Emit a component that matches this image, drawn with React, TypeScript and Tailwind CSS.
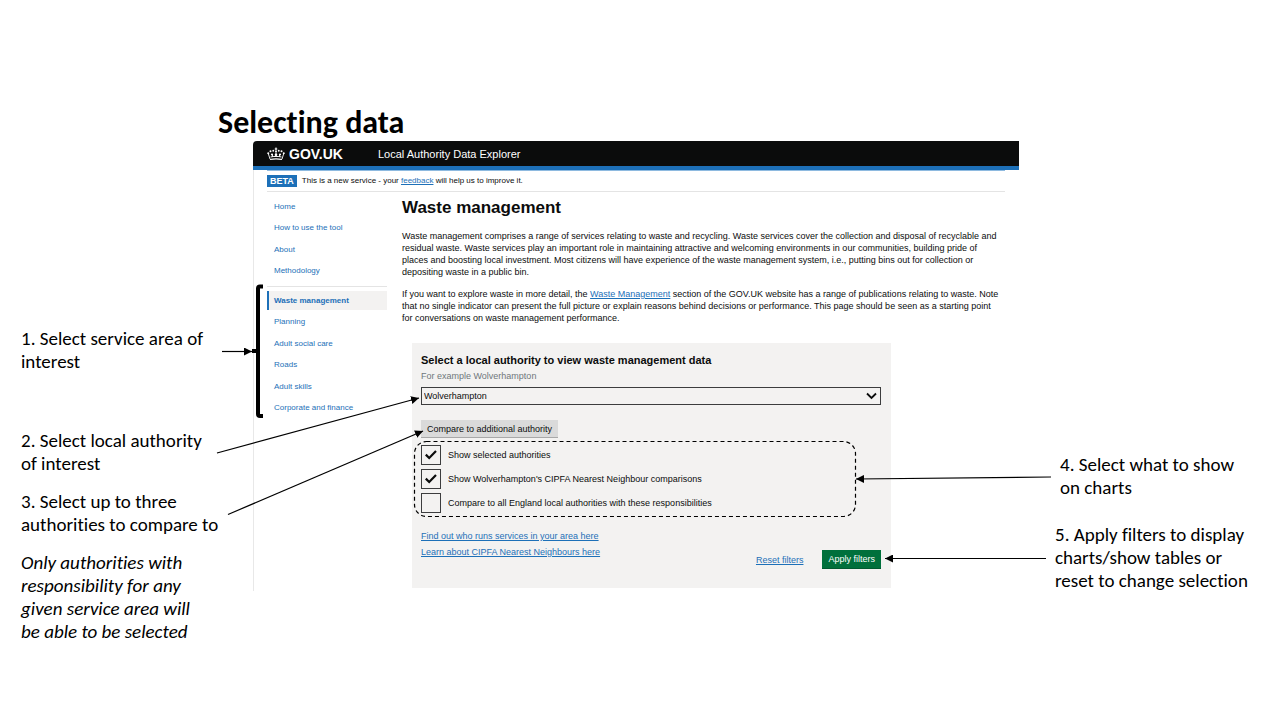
import { useState } from "react";

const guideLinks = ["Home", "How to use the tool", "About", "Methodology"];
const serviceLinks = ["Waste management", "Planning", "Adult social care", "Roads", "Adult skills", "Corporate and finance"];
const link = "text-[#1d70b8] underline";

function Crown() {
  return (
    <svg className="h-[14px] w-[18px]" viewBox="0 0 36 28" fill="none" stroke="white" strokeWidth="1.8" aria-hidden="true">
      <path d="M6 25c7-1.600 17-1.600 24 0" strokeWidth="2.4" />
      <path d="M6 24L2.500 13M30 24l3.500-11M12 20l-2-6M24 20l2-6M18 20v-9" />
      <path d="M7 20c7-1.600 15-1.600 22 0" strokeWidth="2" />
      <path d="M15.500 4h5M18 1v6" strokeWidth="2.2" />
      <g fill="white" stroke="none">
        <circle cx="18" cy="9" r="2" />
        <circle cx="12.500" cy="7.500" r="1.900" />
        <circle cx="23.500" cy="7.500" r="1.900" />
        <circle cx="7" cy="8.500" r="2" />
        <circle cx="29" cy="8.500" r="2" />
        <circle cx="2.500" cy="12.500" r="2" />
        <circle cx="33.500" cy="12.500" r="2" />
        <circle cx="18" cy="15.500" r="2.600" />
        <circle cx="10" cy="15" r="2.200" />
        <circle cx="26" cy="15" r="2.200" />
      </g>
    </svg>
  );
}

function Option({ label, initial }: { label: string; initial: boolean }) {
  const [on, setOn] = useState(initial);
  return (
    <label className="flex h-5 items-center gap-[7px]">
      <span className="relative flex size-5">
        <input type="checkbox" checked={on} onChange={() => setOn(!on)} className="size-5 appearance-none border border-[#3c3d3e]" />
        {on && (
          <svg className="pointer-events-none absolute inset-0 size-5" viewBox="0 0 20 20" fill="none" stroke="#0b0c0c" strokeWidth="2.2" aria-hidden="true">
            <path d="M4.800 9.600l3.400 3.400L15 6" />
          </svg>
        )}
      </span>
      {label}
    </label>
  );
}

function NavGroup({ items, current, className }: { items: string[]; current?: string; className: string }) {
  return (
    <ul className={`flex flex-col justify-between ${className}`}>
      {items.map((item) => (
        <li key={item}>
          <a
            href="#"
            className={
              item === current
                ? "flex h-[19px] items-center border-l-2 border-[#1d70b8] bg-[#f3f2f1] pl-[5px] font-bold"
                : "flex h-[19px] items-center pl-[7px]"
            }
          >
            {item}
          </a>
        </li>
      ))}
    </ul>
  );
}

function Annotations() {
  return (
    <svg className="pointer-events-none absolute top-0 -left-[37px] h-[440px] w-[840px]" viewBox="216 141 840 440" fill="none" stroke="black" aria-hidden="true">
      <defs>
        <marker id="head" markerUnits="userSpaceOnUse" markerWidth="9" markerHeight="8" refX="8" refY="4" orient="auto">
          <path d="M0 0L8 4L0 8z" fill="black" stroke="none" />
        </marker>
      </defs>
      <path d="M263 286.500h-3q-2 0-2 2v125.500q0 2 2 2h3" strokeWidth="4" />
      <path d="M252 351h6" strokeWidth="4" />
      <g strokeWidth="1.2">
        <path d="M222 351.500H252" markerEnd="url(#head)" />
        <path d="M217 453L419 398" markerEnd="url(#head)" />
        <path d="M228 514.500L423 431" markerEnd="url(#head)" />
        <path d="M1051 477L856 479" markerEnd="url(#head)" />
        <path d="M1046 558.500H885" markerEnd="url(#head)" />
      </g>
      <rect x="414.500" y="441.500" width="441" height="75" rx="12" strokeWidth="1.2" strokeDasharray="4 3" />
    </svg>
  );
}

export default function App() {
  return (
    <div className="min-h-screen bg-white pt-[104px] font-['Carlito','Lato',sans-serif] text-black [font-variant-ligatures:none]">
      <h1 className="pl-[218px] text-[32px] leading-[37px] font-bold">Selecting data</h1>
      <div className="flex">
        <aside className="w-[253px] shrink-0 pt-[186px] pl-[21px] text-[19px] leading-[23px] whitespace-nowrap">
          <p>1. Select service area of<br />interest</p>
          <p className="mt-14">2. Select local authority<br />of interest</p>
          <p className="mt-[15px]">3. Select up to three<br />authorities to compare to</p>
          <p className="mt-[15px] italic">Only authorities with<br />responsibility for any<br />given service area will<br />be able to be selected</p>
        </aside>

        <div className="relative flex-1 self-start font-['Liberation_Sans',Arial,sans-serif] text-[9px] leading-3 text-[#0b0c0c]">
          <header className="flex h-[29px] items-center rounded-tl border-b-4 border-[#1d70b8] bg-[#0b0c0c] pl-[14px] text-white">
            <Crown />
            <span className="ml-1 w-[89px] text-[14px] font-bold">GOV.UK</span>
            <span className="text-[11px]">Local Authority Data Explorer</span>
          </header>
          <div className="border-l border-[#e8e8e8] pr-[14px] pb-[3px] pl-[13px]">
            <div className="flex h-[22px] items-center gap-[5px] border-y border-t-[#8ebae0] border-b-[#e4e4e4] text-[8px]">
              <strong className="bg-[#1d70b8] px-[3px] text-[9px] text-white">BETA</strong>
              <p>This is a new service - your <a href="#" className={link}>feedback</a> will help us to improve it.</p>
            </div>
            <div className="flex gap-[15px]">
              <nav className="w-[120px] shrink-0 pt-[5px] text-[8px] text-[#1d70b8]">
                <NavGroup items={guideLinks} className="h-[84px]" />
                <hr className="mt-[5px] mb-1 border-[#e4e4e4]" />
                <NavGroup items={serviceLinks} current="Waste management" className="h-[127px]" />
              </nav>
              <main className="whitespace-nowrap">
                <h2 className="pt-[6px] text-[17px] leading-5 font-bold">Waste management</h2>
                <p className="mt-3">
                  Waste management comprises a range of services relating to waste and recycling. Waste services cover the collection and disposal of recyclable and<br />
                  residual waste. Waste services play an important role in maintaining attractive and welcoming environments in our communities, building pride of<br />
                  places and boosting local investment. Most citizens will have experience of the waste management system, i.e., putting bins out for collection or<br />
                  depositing waste in a public bin.
                </p>
                <p className="mt-[10px]">
                  If you want to explore waste in more detail, the <a href="#" className={link}>Waste Management</a> section of the GOV.UK website has a range of publications relating to waste. Note<br />
                  that no single indicator can present the full picture or explain reasons behind decisions or performance. This page should be seen as a starting point<br />
                  for conversations on waste management performance.
                </p>
                <form className="mt-[19px] ml-[10px] w-[479px] bg-[#f3f2f1] pt-[10px] pr-[10px] pb-[19px] pl-[9px]" onSubmit={(e) => e.preventDefault()}>
                  <label htmlFor="authority" className="block text-[11px] leading-[14px] font-bold">Select a local authority to view waste management data</label>
                  <p className="mt-[3px] text-[#6f777b]">For example Wolverhampton</p>
                  <div className="relative mt-[5px]">
                    <select id="authority" className="block h-[18px] w-full appearance-none border border-[#3c3d3e] bg-transparent pl-[2px]">
                      <option>Wolverhampton</option>
                    </select>
                    <svg className="pointer-events-none absolute top-[5px] right-1 h-2 w-[11px]" viewBox="0 0 11 8" fill="none" stroke="#0b0c0c" strokeWidth="1.8" aria-hidden="true">
                      <path d="M1 1.500L5.500 6L10 1.500" />
                    </svg>
                  </div>
                  <button type="button" className="mt-[15px] block h-[18px] border-b border-[#a8a8a8] bg-[#dadada] px-[6px]">Compare to additional authority</button>
                  <fieldset className="mt-[7px] flex flex-col gap-1">
                    <Option label="Show selected authorities" initial={true} />
                    <Option label="Show Wolverhampton's CIPFA Nearest Neighbour comparisons" initial={true} />
                    <Option label="Compare to all England local authorities with these responsibilities" initial={false} />
                  </fieldset>
                  <div className="mt-[17px] flex items-end justify-between">
                    <div className="flex flex-col items-start gap-1 pb-[11px]">
                      <a href="#" className={link}>Find out who runs services in your area here</a>
                      <a href="#" className={link}>Learn about CIPFA Nearest Neighbours here</a>
                    </div>
                    <div className="flex items-center gap-[19px]">
                      <a href="#" className={link}>Reset filters</a>
                      <button type="submit" className="h-[19px] border-b border-[#005a30] bg-[#00703c] px-[6px] text-white">Apply filters</button>
                    </div>
                  </div>
                </form>
              </main>
            </div>
          </div>
          <Annotations />
        </div>

        <aside className="w-[261px] shrink-0 pt-[312px] pl-9 text-[19px] leading-[23px] whitespace-nowrap">
          <p className="pl-[5px]">4. Select what to show<br />on charts</p>
          <p className="mt-6">5. Apply filters to display<br />charts/show tables or<br />reset to change selection</p>
        </aside>
      </div>
    </div>
  );
}
